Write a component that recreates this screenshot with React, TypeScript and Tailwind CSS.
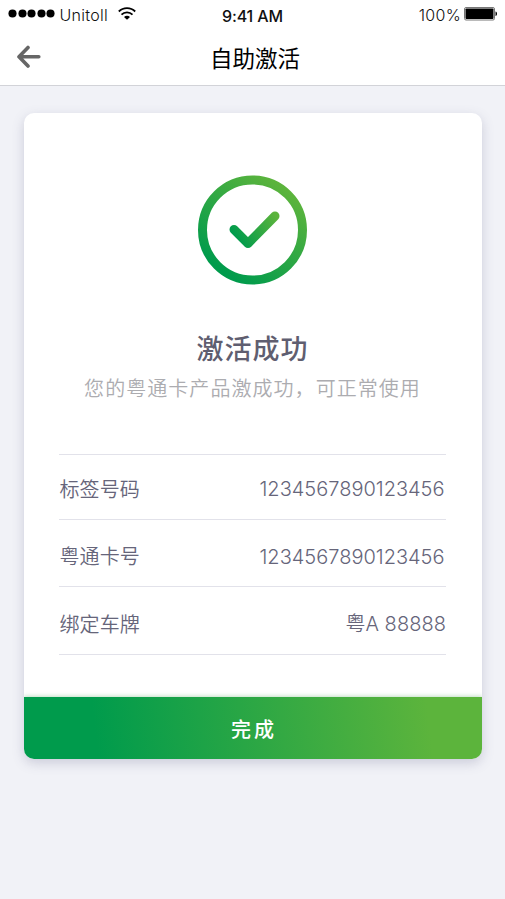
import React from 'react';

interface DetailRow {
  label: string;
  value: string;
  className: string;
  valueClassName: string;
}

const rows: DetailRow[] = [
  { label: '标签号码', value: '1234567890123456', className: 'h-[65px] pt-[4px]', valueClassName: 'mr-[1.5px]' },
  { label: '粤通卡号', value: '1234567890123456', className: 'h-[67px] pt-[7px]', valueClassName: 'mr-[1.5px]' },
  { label: '绑定车牌', value: '粤A 88888', className: 'h-[68px] pt-[7px]', valueClassName: 'tracking-[0.05px]' },
];

const StatusBar: React.FC = () => (
  <div className="grid h-[30px] grid-cols-3 items-center pl-2 pr-[6px] text-base leading-none text-[#111]">
    <div className="flex items-center">
      <div className="flex gap-[0.5px] pb-1">
        {Array.from({ length: 5 }).map((_, index) => (
          <span key={index} className="h-[9px] w-[9px] scale-90 rounded-full bg-black"></span>
        ))}
      </div>
      <span className="ml-[4.5px] pb-px font-[350] tracking-[0.3px]">Unitoll</span>
      <svg className="mb-[3px] ml-[10px]" width="18" height="13" viewBox="0 0 18 13" fill="none" stroke="black" strokeWidth="1.8">
        <path d="M0.8 4.5C5.3 0 12.7 0 17.2 4.5" />
        <path d="M3.5 7.6C6.5 4.6 11.5 4.6 14.5 7.6" />
        <path d="M6 9.9C7.8 8.2 10.2 8.2 12 9.9L9 12.8Z" fill="black" stroke="none" />
      </svg>
    </div>
    <span className="pr-[2px] pt-[1px] text-center font-medium tracking-[-0.1px]">9:41 AM</span>
    <div className="flex items-center justify-end pb-px">
      <span className="font-[350] tracking-[0.3px]">100%</span>
      <svg className="mb-px ml-[3px]" width="35" height="14" viewBox="0 0 35 14">
        <rect x="0.5" y="0.5" width="30" height="12.5" rx="1.5" fill="white" stroke="#777" />
        <rect x="1.5" y="1.5" width="28" height="10.5" rx="0.8" fill="black" />
        <path d="M31.5 4.5C33.5 5 33.5 8.5 31.5 9Z" fill="black" />
      </svg>
    </div>
  </div>
);

const SuccessIcon: React.FC = () => (
  <svg width="110" height="110" viewBox="0 0 110 110" fill="none" strokeWidth="9">
    <defs>
      <linearGradient id="ring" x1="26" y1="96" x2="88" y2="14" gradientUnits="userSpaceOnUse">
        <stop offset="0" stopColor="#009b4c" />
        <stop offset="1" stopColor="#5cb43c" />
      </linearGradient>
      <linearGradient id="tick" x1="40" y1="66" x2="78" y2="41" gradientUnits="userSpaceOnUse">
        <stop offset="0" stopColor="#009b4c" />
        <stop offset="1" stopColor="#5cb43c" />
      </linearGradient>
    </defs>
    <circle cx="54.5" cy="55" r="50" stroke="url(#ring)" />
    <path d="M36 54.5L50 68.5L77 41" stroke="url(#tick)" strokeLinecap="round" strokeLinejoin="round" />
  </svg>
);

const App: React.FC = () => {
  return (
    <div className="flex h-[899px] w-[505px] flex-col overflow-hidden bg-[#f1f2f7] font-['Inter','Noto_Sans_CJK_SC',sans-serif]">
      <header className="h-[86px] shrink-0 border-b border-[#d2d3d8] bg-white">
        <StatusBar />
        <div className="grid h-[55px] grid-cols-3 items-center">
          <svg className="mb-[2px] ml-4" width="26" height="24" viewBox="0 0 26 24" fill="none" stroke="#666" strokeWidth="3.6" strokeLinecap="round" strokeLinejoin="round">
            <path d="M12 2.5L3 11.7L12 21M3.5 11.7H22.8" />
          </svg>
          <h1 className="pl-[5px] pt-[3px] text-center text-[22.5px] leading-none text-black">自助激活</h1>
        </div>
      </header>

      <main className="ml-[24px] mt-[27px] flex h-[646px] w-[458px] flex-col overflow-hidden rounded-[10px] bg-white shadow-[0_4px_12px_rgba(90,90,130,0.25)]">
        <div className="flex flex-col items-center pt-[62px] pr-[1px]">
          <SuccessIcon />
          <h2 className="mt-[46px] text-[27px] font-medium leading-[38px] tracking-[1px] text-[#5f5e70]">激活成功</h2>
          <p className="mt-[6px] whitespace-nowrap text-[20px] font-[350] leading-[28px] tracking-[1.05px] text-[#acacb0]">
            您的粤通卡产品激成功，可正常使用
          </p>
        </div>

        {/* Card details */}
        <dl className="mx-[35px] mt-[51px] w-[387px] border-t-[1.5px] border-[#e2e2ea] text-[20px] font-[350] text-[#66657a]">
          {rows.map((row) => (
            <div key={row.label} className={`flex items-center justify-between border-b-[1.5px] border-[#e2e2ea] ${row.className}`}>
              <dt className="pl-[0.5px] pt-px tracking-[0.1px]">{row.label}</dt>
              <dd className={row.valueClassName}>{row.value}</dd>
            </div>
          ))}
        </dl>

        <button className="mt-auto h-[62px] shrink-0 bg-[linear-gradient(83deg,#009b4c_16%,#5cb43c_88%)] pl-[2px] pt-[3px] text-[20px] font-medium tracking-[3px] text-white shadow-[0_-1px_4px_rgba(50,150,60,0.3)]">
          完成
        </button>
      </main>
    </div>
  );
};

export default App;
